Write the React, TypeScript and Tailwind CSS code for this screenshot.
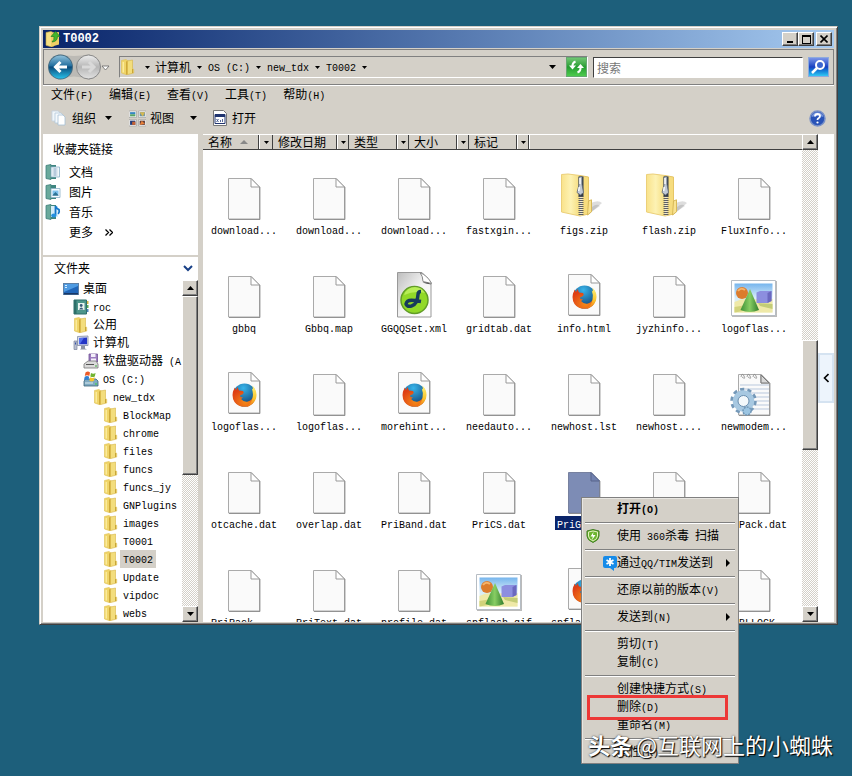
import { Fragment, useState } from 'react';
import clsx from 'clsx';

const raised = 'border border-t-white border-l-white border-r-[#404040] border-b-[#404040] bg-[#d4d0c8] shadow-[inset_-1px_-1px_0_#808080]';

type Kind = 'blank' | 'zip' | 'dw' | 'firefox' | 'image' | 'ini';

const files: { name: string; kind: Kind }[] = [
  { name: 'download...', kind: 'blank' },
  { name: 'download...', kind: 'blank' },
  { name: 'download...', kind: 'blank' },
  { name: 'fastxgin...', kind: 'blank' },
  { name: 'figs.zip', kind: 'zip' },
  { name: 'flash.zip', kind: 'zip' },
  { name: 'FluxInfo...', kind: 'blank' },
  { name: 'gbbq', kind: 'blank' },
  { name: 'Gbbq.map', kind: 'blank' },
  { name: 'GGQQSet.xml', kind: 'dw' },
  { name: 'gridtab.dat', kind: 'blank' },
  { name: 'info.html', kind: 'firefox' },
  { name: 'jyzhinfo...', kind: 'blank' },
  { name: 'logoflas...', kind: 'image' },
  { name: 'logoflas...', kind: 'firefox' },
  { name: 'logoflas...', kind: 'blank' },
  { name: 'morehint...', kind: 'firefox' },
  { name: 'needauto...', kind: 'blank' },
  { name: 'newhost.lst', kind: 'blank' },
  { name: 'newhost....', kind: 'blank' },
  { name: 'newmodem...', kind: 'ini' },
  { name: 'otcache.dat', kind: 'blank' },
  { name: 'overlap.dat', kind: 'blank' },
  { name: 'PriBand.dat', kind: 'blank' },
  { name: 'PriCS.dat', kind: 'blank' },
  { name: 'PriGS.dat', kind: 'blank' },
  { name: 'PriMA.dat', kind: 'blank' },
  { name: 'PriPack.dat', kind: 'blank' },
  { name: 'PriPack_...', kind: 'blank' },
  { name: 'PriText.dat', kind: 'blank' },
  { name: 'profile.dat', kind: 'blank' },
  { name: 'spflash.gif', kind: 'image' },
  { name: 'spflash....', kind: 'firefox' },
  { name: 'STOCK.dat', kind: 'blank' },
  { name: 'TBLLOCK', kind: 'blank' },
];

const tree = [
  { name: '桌面', icon: 'desktop', pad: 'pl-5' },
  { name: 'roc', icon: 'user', pad: 'pl-[30px]' },
  { name: '公用', icon: 'folder', pad: 'pl-[30px]' },
  { name: '计算机', icon: 'computer', pad: 'pl-[30px]' },
  { name: '软盘驱动器 (A:)', icon: 'floppy', pad: 'pl-10' },
  { name: 'OS (C:)', icon: 'drive', pad: 'pl-10' },
  { name: 'new_tdx', icon: 'folder', pad: 'pl-[50px]' },
  { name: 'BlockMap', icon: 'folder', pad: 'pl-[60px]' },
  { name: 'chrome', icon: 'folder', pad: 'pl-[60px]' },
  { name: 'files', icon: 'folder', pad: 'pl-[60px]' },
  { name: 'funcs', icon: 'folder', pad: 'pl-[60px]' },
  { name: 'funcs_jy', icon: 'folder', pad: 'pl-[60px]' },
  { name: 'GNPlugins', icon: 'folder', pad: 'pl-[60px]' },
  { name: 'images', icon: 'folder', pad: 'pl-[60px]' },
  { name: 'T0001', icon: 'folder', pad: 'pl-[60px]' },
  { name: 'T0002', icon: 'folder', pad: 'pl-[60px]' },
  { name: 'Update', icon: 'folder', pad: 'pl-[60px]' },
  { name: 'vipdoc', icon: 'folder', pad: 'pl-[60px]' },
  { name: 'webs', icon: 'folder', pad: 'pl-[60px]' },
];

const columns = [
  { name: '名称', width: 'w-14', sorted: true },
  { name: '修改日期', width: 'w-16' },
  { name: '类型', width: 'w-12' },
  { name: '大小', width: 'w-12' },
  { name: '标记', width: 'w-12' },
];

const menuGroups = [
  ['打开(O)'],
  ['使用 360杀毒 扫描'],
  ['通过QQ/TIM发送到'],
  ['还原以前的版本(V)'],
  ['发送到(N)'],
  ['剪切(T)', '复制(C)'],
  ['创建快捷方式(S)', '删除(D)', '重命名(M)'],
  ['属性(R)'],
];

// Latin runs are half the width of a CJK glyph
function Text({ children }: { children: string }) {
  return (
    <span className="whitespace-pre">
      {children.split(/([\x20-\x7e]+)/).map((part, i) =>
        i % 2 ? <span key={i} className="font-['Liberation_Mono',monospace] text-[10px]">{part}</span> : <Fragment key={i}>{part}</Fragment>
      )}
    </span>
  );
}

function Caret({ up, small }: { up?: boolean; small?: boolean }) {
  return (
    <svg width={small ? 5 : 7} height={small ? 3 : 4} viewBox="0 0 8 4" preserveAspectRatio="none" className={up ? 'rotate-180' : ''} aria-hidden="true">
      <path d="M0 0H8L4 4Z" fill="#000" />
    </svg>
  );
}

function FolderIcon() {
  return (
    <svg width="16" height="16" viewBox="0 0 16 16" className="shrink-0">
      <path d="M1.500 1.500 6 .5 8 2v13l-2 .5-4.500-1.500Z" fill="#f0d568" stroke="#dfc052" strokeWidth=".6" />
      <path d="M6 2.500 8.500 1.500V15L6 15.800Z" fill="#cfa93a" />
      <path d="M7.500 2 12.500 1v8.500l1.200.8V14l-6.200 1.600Z" fill="#f3dd7c" stroke="#d6b545" strokeWidth=".6" />
      <path d="M3.200 3v10.500" stroke="#fff4b5" />
      <path d="M12.500 10v4" stroke="#c49f2f" strokeWidth=".9" />
    </svg>
  );
}

function TreeIcon({ icon }: { icon: string }) {
  if (icon === 'folder') return <FolderIcon />;
  if (icon === 'desktop') {
    return (
      <svg width="16" height="16" viewBox="0 0 16 16" className="shrink-0">
        <rect x=".5" y="2.500" width="15" height="11" fill="#2166b8" stroke="#5d80a6" />
        <path d="M1 3h14v2L1 11Z" fill="#4f9be2" />
        <path d="M1 12h14v1.500H1Z" fill="#183867" />
        <path d="M2 4h2v1H2zm0 2h2v1H2z" fill="#d6efff" />
      </svg>
    );
  }
  if (icon === 'user') {
    return (
      <svg width="16" height="16" viewBox="0 0 16 16" className="shrink-0">
        <path d="M1 1h12.500v14H1Z" fill="#4e968b" stroke="#2f6e6b" />
        <path d="M1 1h2.500v14H1Z" fill="#2d6f69" />
        <path d="M14 2h1.500v3H14z" fill="#d5b545" />
        <path d="M14 6h1.500v3H14z" fill="#5dab52" />
        <path d="M14 10h1.500v3H14z" fill="#4c83bb" />
        <rect x="5" y="4" width="6.500" height="7" fill="#e9f4ef" />
        <circle cx="8.200" cy="6.500" r="1.400" fill="#375a78" />
        <path d="M6 10.500q2.200-3.800 4.500 0Z" fill="#375a78" />
      </svg>
    );
  }
  if (icon === 'computer') {
    return (
      <svg width="16" height="16" viewBox="0 0 16 16" className="shrink-0">
        <path d="M4.500 1.500 15 1v9.500H4.500Z" fill="#d7dceb" stroke="#848da3" strokeWidth=".8" />
        <path d="M6 3 14 2.500v6.700H6Z" fill="#2436c5" />
        <path d="m6 3 5-.3L7 9H6Z" fill="#5370ee" />
        <path d="M8 11h4v2.500l2 1H7l1-1Z" fill="#8c93a4" />
        <path d="M1 6h3v8.500H1Z" fill="#b8bfd1" stroke="#7d849b" strokeWidth=".7" />
        <path d="M2 7.500h1v2H2z" fill="#3654a6" />
      </svg>
    );
  }
  if (icon === 'floppy') {
    return (
      <svg width="16" height="16" viewBox="0 0 16 16" className="shrink-0">
        <path d="M6 1h8.500v8H6Z" fill="#9c7cc0" stroke="#6e5194" strokeWidth=".8" />
        <path d="M8 1h4.500v3H8Zm0 4.500h5V9H8Z" fill="#f3effa" />
        <path d="m1 11 4-3h8l2 3v4H1Z" fill="#dadada" stroke="#777" strokeWidth=".8" />
        <path d="M3 11.500h8" stroke="#555" />
        <path d="M12 13h2" stroke="#3caf3c" />
      </svg>
    );
  }
  return (
    <svg width="16" height="16" viewBox="0 0 16 16" className="shrink-0">
      <path d="m1 10 2-2h10l2 2v5H1Z" fill="#7faac1" stroke="#3c6578" strokeWidth=".8" />
      <path d="M2 12h8" stroke="#dcebf1" />
      <path d="M12 13h2" stroke="#3bd03b" />
      <path d="M2.500 1.500q2.500-1.800 4.500 0l-.7 3.500q-2.200-1.400-4.500 0Z" fill="#ec5b28" />
      <path d="M8 2q2.300 1.300 4.600 0l-.8 3.500q-2.200 1.200-4.500 0Z" fill="#71b532" />
      <path d="M1.700 5.800q2.300-1.400 4.500 0L5.400 9.200q-2.200-1.500-4.500 0Z" fill="#3080d3" />
      <path d="M7.200 6.200q2.300 1.400 4.500 0l-.8 3.500q-2.200 1.400-4.500 0Z" fill="#f5c32a" />
    </svg>
  );
}

function LinkIcon({ kind }: { kind: string }) {
  return (
    <svg width="16" height="16" viewBox="0 0 16 16" className="shrink-0">
      <path d="M1 1.500 6 .5v15l-5-1Z" fill="#6aa99b" stroke="#3e7d79" strokeWidth=".8" />
      <path d="M6 1h5v14H6Z" fill="#3e8580" />
      {kind === '文档' && (
        <>
          <path d="M6 3h8.500v10H6Z" fill="#f2f8fc" stroke="#8ab0c7" strokeWidth=".8" />
          <path d="M7.500 5h5M7.500 7h5M7.500 9h5M7.500 11h5M10 4v8" stroke="#8eabc5" strokeWidth=".7" />
        </>
      )}
      {kind === '图片' && (
        <>
          <path d="M6 4.500h9v9H6Z" fill="#f5fbff" stroke="#8ab0c7" strokeWidth=".8" />
          <path d="M7.500 6.500h6v4h-6Z" fill="#80c2ed" />
          <path d="m7.500 11 3-3 3 3v.8h-6Z" fill="#2d7397" />
        </>
      )}
      {kind === '音乐' && (
        <>
          <path d="M6 2h7v11H6Z" fill="#d5edf8" />
          <path d="M10.500 2v9M10.500 2q1 2.800 3.500 3.600.8 2.700-.8 4.400" fill="none" stroke="#1477ca" strokeWidth="1.800" />
          <ellipse cx="8.800" cy="11.600" rx="2.600" ry="2" fill="#2591df" />
        </>
      )}
    </svg>
  );
}

function Page({ selected, shift = 0 }: { selected?: boolean; shift?: number }) {
  return (
    <g transform={`translate(0 ${-shift})`}>
      <path d="M9 6.500H32l8 8.500V48H9Z" fill="#777" opacity=".35" />
      <path d="M8.500 6.500H31L39.500 15V47H8.500Z" fill={selected ? '#7d8cb5' : '#fafafa'} stroke={selected ? '#77819f' : '#aaa'} />
      <path d="M31 6.500V15h8.500Z" fill={selected ? '#7282b0' : '#fff'} stroke={selected ? '#58658b' : '#999'} />
      <path d="M40 15v32.500H9" fill="none" stroke="#808080" opacity=".7" />
    </g>
  );
}

function FileIcon({ kind, selected }: { kind: Kind; selected?: boolean }) {
  return (
    <svg width="48" height="48" viewBox="0 0 48 48" aria-hidden="true">
      <defs>
        <radialGradient id="fox-orange" cx="55%" cy="75%" r="65%">
          <stop offset="0" stopColor="#f58a18" />
          <stop offset="1" stopColor="#df3f14" />
        </radialGradient>
        <linearGradient id="fox-tail" x1="0" y1="0" x2="0" y2="1">
          <stop offset="0" stopColor="#fff27a" />
          <stop offset=".6" stopColor="#fbc52c" />
          <stop offset="1" stopColor="#ef6a12" />
        </linearGradient>
        <radialGradient id="fox-blue" cx="45%" cy="20%" r="75%">
          <stop offset="0" stopColor="#37b4ea" />
          <stop offset="1" stopColor="#134479" />
        </radialGradient>
        <linearGradient id="zip-body" x1="0" y1="0" x2="1" y2="0">
          <stop offset="0" stopColor="#f9e28a" />
          <stop offset=".5" stopColor="#fdf2b4" />
          <stop offset="1" stopColor="#f5dc7c" />
        </linearGradient>
        <linearGradient id="cone" x1="0" y1="0" x2="1" y2="0">
          <stop offset="0" stopColor="#3d9136" />
          <stop offset=".5" stopColor="#88cd63" />
          <stop offset="1" stopColor="#2f7d2c" />
        </linearGradient>
        <linearGradient id="sky" x1="0" y1="0" x2="0" y2="1">
          <stop offset="0" stopColor="#76b5ed" />
          <stop offset=".5" stopColor="#d9edf9" />
          <stop offset="1" stopColor="#eef3c5" />
        </linearGradient>
        <linearGradient id="dw-page" x1="0" y1="0" x2="1" y2="1">
          <stop offset="0" stopColor="#bdbdbd" />
          <stop offset=".5" stopColor="#f4f4f4" />
          <stop offset="1" stopColor="#fff" />
        </linearGradient>
      </defs>
      {kind === 'blank' && <Page selected={selected} />}
      {kind === 'firefox' && (
        <>
          <Page shift={2} />
          <circle cx="24.500" cy="27" r="11.500" fill="url(#fox-blue)" />
          <path d="M14.500 19.500l1.500 2.500 1.500-3 1.500 3.500 4 .5q1.500 1.500 0 3l-3 1.500.5 1.500 2.500.5-2 1.500q3 3.500 7 2.500 5-1.500 6-7.500l2-1q-.5 11-9 13.500-8 1.500-12.500-4.500-4-6.500 0-14Z" fill="url(#fox-orange)" />
          <path d="M32.500 17.500q5.500 6 3.500 13-3 7.500-10 8.500 5.500-3.500 6.500-9 1.200-5-.8-9.500l1.200 1Z" fill="url(#fox-tail)" />
        </>
      )}
      {kind === 'zip' && (
        <>
          <path d="M28 43 42 31q-4-4-13 1Z" fill="#777" opacity=".25" />
          <path d="M31 40 40 34q-3-3-8 1Z" fill="#666" opacity=".2" />
          <path d="M1.500 2.500 8 2l12 1.500V44L1.500 40Z" fill="url(#zip-body)" stroke="#ecd07a" />
          <path d="M20 3.500 28.500 5v37L20 44Z" fill="#f6dc7e" stroke="#e6c667" />
          <path d="m28.500 29 3-1.200v12l-4 3.200Z" fill="#f9e391" stroke="#d8b958" />
          <path d="M19.500 25h3v18.500h-3Z" fill="#eee9d4" />
          <path d="M21 24v19" stroke="#5f6062" strokeWidth="5" strokeDasharray="1 1" />
          <path d="M18.500 4.500h5v20h-5Z" fill="#343c48" />
          <path d="m19 5 3-.5v8l1.500 8-3 2.500-3.500-2.500L19 13Z" fill="#c1cad6" stroke="#5a6472" strokeWidth=".8" />
          <path d="M20 6v6m-.8 3-.5 4" stroke="#fff" strokeWidth="1.400" />
        </>
      )}
      {kind === 'dw' && (
        <>
          <path d="M7.500 2.500H32l9 10V47H7.500Z" fill="url(#dw-page)" stroke="#999" />
          <path d="M30 2.500q3 4 3 9l8.500 2Q38 6 30 2.500Z" fill="#fff" stroke="#888" />
          <path d="M32.500 12.500q5-1 9 2-5-.5-9-2Z" fill="#555" />
          <circle cx="24.500" cy="30" r="13.500" fill="#91d928" stroke="#619c28" strokeWidth="1.500" />
          <path d="M14 25q3-8 11-8 7 0 10 6-10-3-21 2Z" fill="#c8f66b" opacity=".7" />
          <path d="M31 21.500q-3 0-3 3-.5 10-6.500 11.500-5 1-5.500-2 1-5 9-3.500l6 1" fill="none" stroke="#173b5c" strokeWidth="3.500" />
        </>
      )}
      {kind === 'image' && (
        <>
          <path d="M2 11h45v36H2Z" fill="#777" opacity=".5" />
          <path d="M1.500 10.500h44v35h-44Z" fill="#fff" stroke="#b6bdc4" />
          <path d="M4.500 13.500h38v29h-38Z" fill="url(#sky)" />
          <path d="M4.500 32q9-5 18-2 11-3 20-1v13.500h-38Z" fill="#efe9a8" />
          <path d="m4.500 37 12-2 7 4-19 3.500Z" fill="#d2d37b" />
          <path d="m28 33 14.500 1v5L30 36Z" fill="#c3cc77" />
          <circle cx="12" cy="23" r="6" fill="#dc7c2d" />
          <path d="M8 21q3-4 7-1" stroke="#f5b46c" fill="none" strokeWidth="2" />
          <path d="M26.500 22.500 30 21h11.500v10l-4 2h-11Z" fill="#8c8edf" />
          <path d="M37.500 23 41.500 21v10l-4 2Z" fill="#6b68bf" />
          <path d="m20 19 9 21q-9 4-18.500 0Z" fill="url(#cone)" />
        </>
      )}
      {kind === 'ini' && (
        <>
          <Page />
          <path d="M10 17h29M10 21h29M10 25h29M10 29h29M10 33h29M10 37h29M10 41h29" stroke="#b9c8dd" />
          <path d="M11 9q1-5 3-1t-2 1m5 0q1-5 3-1t-2 1m5 0q1-5 3-1t-2 1" fill="none" stroke="#888" strokeWidth=".8" />
          <path d="M31 7v8h8Z" fill="#d8d8d8" stroke="#777" />
          <circle cx="13.500" cy="33" r="11.500" fill="none" stroke="#7498b8" strokeWidth="3.500" strokeDasharray="4 3.220" />
          <circle cx="13.500" cy="33" r="8" fill="none" stroke="#a7c8e1" strokeWidth="5.500" />
          <circle cx="13.500" cy="33" r="5.500" fill="#f3f8fb" stroke="#698eaf" />
          <circle cx="17" cy="43" r="4" fill="#9cc5e2" stroke="#7197b7" strokeDasharray="2 1" strokeWidth="1.500" />
        </>
      )}
    </svg>
  );
}

const ditherBg = 'bg-[repeating-conic-gradient(#d4d0c8_0_25%,#ffffff_0_50%)] bg-[length:2px_2px]';

function ScrollButton({ up }: { up?: boolean }) {
  return (
    <button aria-label={up ? '向上滚动' : '向下滚动'} className={clsx('flex h-4 w-full shrink-0 items-center justify-center', raised)}>
      <Caret up={up} />
    </button>
  );
}

function NavBar() {
  return (
    <div className="flex h-9 items-center border border-t-[#808080] border-l-[#808080] border-r-[#808080] border-b-[#808080] pr-1 pl-1 shadow-[0_1px_0_#fff]">
      <svg width="70" height="28" viewBox="0 0 70 28" className="shrink-0" aria-hidden="true">
        <defs>
          <linearGradient id="back" x1="0" y1="0" x2="0" y2="1">
            <stop offset="0" stopColor="#8fc0da" />
            <stop offset=".45" stopColor="#236f9f" />
            <stop offset=".5" stopColor="#0b4a7a" />
            <stop offset="1" stopColor="#29bfe8" />
          </linearGradient>
          <linearGradient id="forward" x1="0" y1="0" x2="0" y2="1">
            <stop offset="0" stopColor="#eee" />
            <stop offset=".5" stopColor="#b6b6b6" />
            <stop offset="1" stopColor="#e2e2e2" />
          </linearGradient>
        </defs>
        <path d="M10 1Q26 5 42 1v26Q26 20 10 27Z" fill="#bcbab5" />
        <circle cx="12.500" cy="14" r="12.500" fill="#476b80" />
        <circle cx="12.500" cy="14" r="11.500" fill="url(#back)" />
        <path d="M19 14H8m4.500-5-5 5 5 5" fill="none" stroke="#fff" strokeWidth="3" />
        <circle cx="40.500" cy="14" r="12" fill="url(#forward)" stroke="#888" />
        <path d="M34 14h11m-4-5 5 5-5 5" fill="none" stroke="#d9d9d9" strokeWidth="3" />
        <path d="M54 13h7l-3.500 4Z" fill="#fff" stroke="#666" strokeWidth=".8" />
      </svg>
      <nav aria-label="地址" className="ml-px flex h-[22px] flex-1 items-center border border-t-[#808080] border-l-[#808080] border-r-white border-b-white">
        <FolderIcon />
        <button aria-label="根目录" className="ml-1 flex w-[15px] justify-center"><Caret small /></button>
        {['计算机', 'OS (C:)', 'new_tdx', 'T0002'].map(name => (
          <Fragment key={name}>
            <a href="#"><Text>{name}</Text></a>
            <button aria-label={`${name} 子目录`} className="flex w-[17px] justify-center"><Caret small /></button>
          </Fragment>
        ))}
        <button aria-label="历史" className="mr-[6px] ml-auto flex w-4 justify-center"><Caret /></button>
        <button aria-label="刷新" className="flex h-5 w-[21px] items-center justify-center border border-[#65a870] bg-linear-to-b from-[#6fc672] via-[#249d31] to-[#4dcb4d]">
          <svg width="17" height="16" viewBox="0 0 17 16">
            <path d="M7.500 2.500Q4 4 4.500 8M9.500 13.500q3.500-1.500 3-5.500" fill="none" stroke="#fff" strokeWidth="2" />
            <path d="M1 6.500h7L4.500 10.500ZM9 9h7l-3.500-4Z" fill="#fff" />
          </svg>
        </button>
      </nav>
      <input
        type="text"
        aria-label="搜索"
        placeholder="搜索"
        className="ml-[5px] h-[21px] w-[210px] border border-t-[#404040] border-l-[#404040] border-r-white border-b-white bg-white px-[3px] placeholder:text-[#777] focus:outline-none"
      />
      <button aria-label="开始搜索" className="ml-[5px] flex h-5 w-[21px] items-center justify-center border border-[#8eaadd] bg-linear-to-b from-[#7a93e8] via-[#183fc0] to-[#35c8f3]">
        <svg width="17" height="16" viewBox="0 0 17 16">
          <circle cx="10" cy="6" r="4" fill="#3b66cf" stroke="#fff" strokeWidth="2" />
          <path d="m7 9-5 5" stroke="#fff" strokeWidth="2.500" />
        </svg>
      </button>
    </div>
  );
}

function Toolbar() {
  return (
    <div className="flex h-[30px] items-center pr-2 pl-2">
      <button className="flex items-center">
        <svg width="16" height="16" viewBox="0 0 16 16">
          <path d="M1 1h6l2 2v8H1Z" fill="#f1f6fa" stroke="#c3d2df" strokeWidth=".8" />
          <path d="M4 3h6l2 2v8H4Z" fill="#f5f9fc" stroke="#b3c9dc" strokeWidth=".8" />
          <path d="M7 5h5l2 2v8H7Z" fill="#fff" stroke="#a5bfd5" strokeWidth=".8" />
        </svg>
        <span className="ml-[5px] mr-[9px]">组织</span>
        <Caret />
      </button>
      <button className="ml-[17px] flex items-center">
        <svg width="17" height="17" viewBox="0 0 16 16">
          <path d="M0 1h7v6H0Zm9 0h7v6H9ZM0 9h7v6H0Zm9 0h7v6H9Z" fill="#fff" stroke="#888" strokeWidth=".5" />
          <path d="M1 2h5v2H1Z" fill="#3686c2" />
          <path d="M1 4h5v2H1Z" fill="#58a366" />
          <path d="M10 2h5v4h-5Z" fill="#7193a0" />
          <path d="m10 2 3 4 2-4Z" fill="#d6b94f" />
          <path d="M1 10h5v4H1Z" fill="#223b78" />
          <path d="M3 11h3v3H3Z" fill="#c86333" />
          <path d="M10 10h5v4h-5Z" fill="#5e3b37" />
          <path d="m10 14 2-4 3 3Z" fill="#e88039" />
        </svg>
        <span className="mr-4 ml-1">视图</span>
        <Caret />
      </button>
      <button className="ml-4 flex items-center">
        <svg width="14" height="16" viewBox="0 0 14 16">
          <path d="M.5.500h10l3 3v12H.5Z" fill="#fff" stroke="#777" />
          <path d="M2 4.500h10v9H2Z" fill="#fff" stroke="#20346f" />
          <path d="M2 4h10v3H2Z" fill="#20346f" />
          <path d="m3.500 9 2 3m0-3-2 3m4-2v2m2-3v3" stroke="#44588f" strokeWidth=".9" />
        </svg>
        <span className="ml-[5px]">打开</span>
      </button>
      <button aria-label="帮助" className="ml-auto">
        <svg width="17" height="17" viewBox="0 0 17 17">
          <circle cx="8.500" cy="8.500" r="7.500" fill="#2953b7" stroke="#7991c7" strokeWidth="1.500" />
          <path d="M2.500 7a6.200 6.200 0 0 1 12 0q-6-2-12 0Z" fill="#7493da" />
          <path d="M6 6.500q0-2.500 2.500-2.500T11 6q0 1.500-1.500 2.300-1 .5-1 1.700" fill="none" stroke="#fff" strokeWidth="1.800" />
          <circle cx="8.500" cy="12.500" r="1.100" fill="#fff" />
        </svg>
      </button>
    </div>
  );
}

function Sidebar() {
  return (
    <aside className="flex w-[155px] shrink-0 flex-col bg-white">
      <div className="h-[121px] shrink-0 pt-1">
        <h2 className="h-6 pl-[10px] leading-[22px]">收藏夹链接</h2>
        <ul>
          {['文档', '图片', '音乐'].map(name => (
            <li key={name}>
              <a href="#" className="flex h-5 items-center gap-2 pl-[2px]">
                <LinkIcon kind={name} />
                {name}
              </a>
            </li>
          ))}
          <li>
            <button className="flex h-5 items-center gap-3 pl-[26px]">
              更多
              <svg width="8" height="7" viewBox="0 0 8 7"><path d="m.5.500 3 3-3 3m4-6 3 3-3 3" fill="none" stroke="#000" strokeWidth="1.300" /></svg>
            </button>
          </li>
        </ul>
      </div>
      <div className="h-[2px] shrink-0 bg-[#d4d0c8]" />
      <button className="flex h-[22px] shrink-0 items-center justify-between pr-[5px] pl-[11px]">
        文件夹
        <svg width="10" height="7" viewBox="0 0 10 7"><path d="m1 1 4 4 4-4" fill="none" stroke="#173f86" strokeWidth="2" /></svg>
      </button>
      <div className="flex min-h-0 flex-1 pt-px">
        <ul className="min-w-0 flex-1 overflow-hidden">
          {tree.map(node => (
            <li key={node.name}>
              <button className={clsx('flex h-[18px] items-center gap-px', node.pad)}>
                <TreeIcon icon={node.icon} />
                <span className={clsx('h-[18px] px-[3px] leading-4', node.name === 'T0002' && 'bg-[#d4d0c8]')}>
                  <Text>{node.name}</Text>
                </span>
              </button>
            </li>
          ))}
        </ul>
        <div className={clsx('flex w-4 flex-col', ditherBg)}>
          <ScrollButton up />
          <div className={clsx('grow-[178]', raised)} />
          <div className="grow-[132]" />
          <ScrollButton />
        </div>
      </div>
    </aside>
  );
}

function FileList({ selected, onSelect }: { selected: number; onSelect: (i: number) => void }) {
  return (
    <main className="flex min-w-0 flex-1 bg-white">
      <div className="flex min-w-0 flex-1 flex-col">
        <div className="flex h-4 shrink-0 border-t border-b border-t-white border-b-[#404040] bg-[#d4d0c8] leading-[14px]">
          {columns.map((col, i) => (
            <Fragment key={col.name}>
              <button className={clsx('flex items-center gap-2 border-r border-r-[#404040] pl-[5px]', col.width)}>
                <span className="whitespace-nowrap">{col.name}</span>
                {col.sorted && <svg width="8" height="4" viewBox="0 0 8 4"><path d="M0 4h8L4 0Z" fill="#888" /></svg>}
              </button>
              <button aria-label={`筛选 ${col.name}`} className={clsx('flex items-center justify-center border-r border-l border-r-[#404040] border-l-white', i === 0 ? 'w-[14px]' : 'w-3')}>
                <Caret small />
              </button>
            </Fragment>
          ))}
          <div className="flex-1 border-l border-l-white" />
        </div>
        <ul className="grid min-h-0 flex-1 auto-rows-[98px] grid-cols-[repeat(auto-fill,82px)] content-start gap-x-[3px] overflow-hidden">
          {files.map((file, i) => (
            <li key={i}>
              <button onClick={() => onSelect(i)} className="flex w-full flex-col items-center gap-[2px] pt-[22px]">
                <FileIcon kind={file.kind} selected={i === selected} />
                <span className={clsx('h-[14px] px-[2px] leading-[13px]', i === selected && 'bg-[#0a246a] text-white')}>
                  <Text>{file.name}</Text>
                </span>
              </button>
            </li>
          ))}
        </ul>
      </div>
      <div className={clsx('flex w-4 shrink-0 flex-col', ditherBg)}>
        <ScrollButton up />
        <div className="grow-[191]" />
        <div className={clsx('grow-[108]', raised)} />
        <div className="grow-[157]" />
        <ScrollButton />
      </div>
      <div className="flex w-4 shrink-0 items-center">
        <button aria-label="折叠" className="flex h-[50px] w-4 items-center justify-center border-2 border-[#d5e3f1] bg-[#edf4fc]">
          <svg width="6" height="10" viewBox="0 0 6 10"><path d="M5.500 1 1.500 5l4 4" fill="none" stroke="#000" strokeWidth="1.600" /></svg>
        </button>
      </div>
    </main>
  );
}

function MenuItem({ label }: { label: string }) {
  const shield = label.startsWith('使用');
  const tim = label.startsWith('通过');
  return (
    <button role="menuitem" className={clsx('flex h-[18px] w-full items-center pr-[6px] pl-[2px]', label.startsWith('打开') && 'font-bold')}>
      <span className={clsx('flex w-[31px] shrink-0', tim && 'justify-end')}>
        {shield && (
          <svg width="14" height="14" viewBox="0 0 14 14">
            <path d="M7 .5 13 2v5q0 4-6 6.500Q1 11 1 7V2Z" fill="#6cb52f" stroke="#407d23" />
            <path d="M7 2 11.500 3v4q0 3-4.500 5-4.500-2-4.500-5V3Z" fill="none" stroke="#e2f0bf" />
            <path d="m7.500 3-3 4.500h2.300L6 11l3.500-5H7Z" fill="#fff" />
          </svg>
        )}
        {tim && (
          <svg width="14" height="16" viewBox="0 0 14 16">
            <path d="M2 1h10q2 0 2 2v8q0 2-2 2h-1v3l-4-3H2q-2 0-2-2V3q0-2 2-2Z" fill="#168be8" />
            <path d="M7 3v8M3.500 5l7 4m0-4-7 4" stroke="#fff" strokeWidth="1.800" />
          </svg>
        )}
      </span>
      <Text>{label}</Text>
      {(tim || label.startsWith('发送到')) && (
        <svg width="4" height="8" viewBox="0 0 4 8" className="ml-auto"><path d="M0 0v8l4-4Z" fill="#000" /></svg>
      )}
    </button>
  );
}

function ContextMenu() {
  return (
    <div role="menu" className="absolute top-[497px] left-[581px] w-[158px] border border-[#808080] bg-[#d4d0c8] p-[2px] shadow-[inset_1px_1px_0_#e8e6e1]">
      {menuGroups.map((group, i) => (
        <Fragment key={i}>
          {i > 0 && <div className="mx-px my-1 h-px bg-[#808080] shadow-[0_1px_0_#fff]" />}
          {group.map(label => <MenuItem key={label} label={label} />)}
        </Fragment>
      ))}
      <div className="pointer-events-none absolute top-[197px] left-[5px] h-[25px] w-[141px] border-3 border-[#ed3837]" />
    </div>
  );
}

export default function App() {
  const [selected, setSelected] = useState(25);

  return (
    <div className="relative flex h-screen flex-col overflow-hidden bg-[#1d5f7b] pt-[26px] pr-[14px] pb-[151px] pl-[39px] font-['Noto_Sans_CJK_SC',sans-serif] text-[12px] leading-4 text-black">
      <section className="flex min-h-0 flex-1 flex-col border border-t-[#d4d0c8] border-l-[#d4d0c8] border-r-[#404040] border-b-[#404040] bg-[#d4d0c8] px-[3px] pt-[3px] pb-[2px] shadow-[inset_1px_1px_0_#fff,inset_-1px_-1px_0_#808080]">
        <header className="flex h-[18px] shrink-0 items-center bg-linear-to-r from-[#0a246a] to-[#a6caf0] pr-[2px] pl-[2px] text-white">
          <svg width="16" height="16" viewBox="0 0 16 16">
            <path d="M1 1.500 6 .5 9 2v13l-3 .8-5-1.500Z" fill="#f6df83" stroke="#c8a944" strokeWidth=".6" />
            <path d="m6 2 8-1v12.500L6 15.800Z" fill="#efcf65" />
            <path d="m10.500.500 4.500 5h-2.500q0 5-5.500 5.500 2.500-2 2-5.500H6Z" fill="#43b52c" stroke="#1f8320" strokeWidth=".7" />
          </svg>
          <h1 className="ml-[2px] font-['Liberation_Mono',monospace] text-[12px] font-bold">T0002</h1>
          <div className="ml-auto flex text-black">
            <button aria-label="最小化" className={clsx('flex h-[14px] w-4 items-end pb-[2px] pl-1', raised)}>
              <span className="h-[2px] w-[6px] bg-black" />
            </button>
            <button aria-label="最大化" className={clsx('flex h-[14px] w-4 items-center justify-center', raised)}>
              <span className="h-[9px] w-[9px] border border-t-2 border-black" />
            </button>
            <button aria-label="关闭" className={clsx('ml-[2px] flex h-[14px] w-4 items-center justify-center', raised)}>
              <svg width="8" height="8" viewBox="0 0 8 8"><path d="m.5.500 7 7m0-7-7 7" stroke="#000" strokeWidth="1.600" /></svg>
            </button>
          </div>
        </header>
        <div className="mt-px shrink-0 pb-px">
          <NavBar />
          <div className="flex h-[18px] items-center gap-4 pt-[2px] pl-2">
            {['文件(F)', '编辑(E)', '查看(V)', '工具(T)', '帮助(H)'].map(label => (
              <button key={label}><Text>{label}</Text></button>
            ))}
          </div>
          <Toolbar />
        </div>
        <div className="flex min-h-0 flex-1 gap-[5px]">
          <Sidebar />
          <FileList selected={selected} onSelect={setSelected} />
        </div>
      </section>
      <ContextMenu />
      <p className="pointer-events-none absolute right-[19px] bottom-4 flex items-center gap-1 text-[22px] leading-8 whitespace-nowrap text-white [text-shadow:1px_1px_1px_#000,0_0_2px_#333]">
        <b>头条</b>
        <span>@互联网上的小蜘蛛</span>
      </p>
    </div>
  );
}
